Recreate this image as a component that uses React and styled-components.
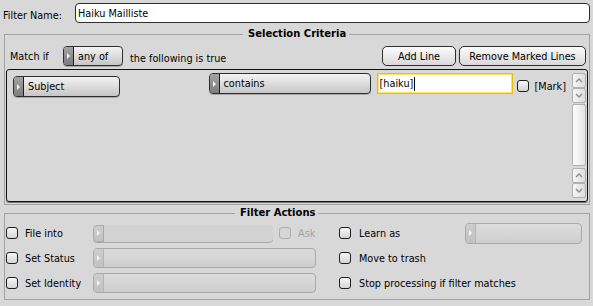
import styled, { createGlobalStyle } from "styled-components";

const panel = "#d8d8d8";
const dark = "#2e2e2e";
const soft = "#a9a9a9";
const frame = "#a2a2a2";

const Global = createGlobalStyle`
  * { box-sizing: border-box; }
  body {
    margin: 0;
    background: ${panel};
    font-family: "DejaVu Sans", "Liberation Sans", sans-serif;
    font-size: 9.7px;
    color: #000;
  }
`;

const Window = styled.div`
  width: 593px;
  height: 306px;
  padding: 3px 3px 0 3px;
  background: ${panel};
  display: flex;
  flex-direction: column;
  overflow: hidden;
`;

const NameRow = styled.div`
  display: flex;
  align-items: flex-start;
  height: 20px;
`;

const NameLabel = styled.span`
  width: 72px;
  padding-top: 7px;
  line-height: 12px;
`;

const TextBox = styled.div`
  flex: ${(p) => (p.$w ? "none" : 1)};
  width: ${(p) => (p.$w ? `${p.$w}px` : "auto")};
  height: ${(p) => p.$h || 20}px;
  background: #fff;
  border: 1px solid ${(p) => (p.$focus ? "#e9bf00" : dark)};
  box-shadow: ${(p) => (p.$focus ? "inset 0 0 0 1px #ffe45c" : "none")};
  border-radius: ${(p) => (p.$focus ? 0 : 4)}px;
  padding-left: ${(p) => (p.$focus ? 2 : 2)}px;
  display: flex;
  align-items: center;
  align-self: ${(p) => (p.$raised ? "flex-start" : "auto")};
  margin-left: ${(p) => p.$ml || 0}px;
  white-space: nowrap;
`;

const Caret = styled.span`
  display: inline-block;
  width: 1px;
  height: 14px;
  background: #000;
  margin-left: 1px;
`;

const Group = styled.fieldset`
  margin: ${(p) => p.$top}px 0 0 1px;
  padding: ${(p) => p.$pad};
  border: 1px solid ${frame};
  min-width: 0;
`;

const GroupTitle = styled.legend`
  font-weight: bold;
  font-size: 10px;
  line-height: 12px;
  padding: 0 3px 0 5px;
  margin-left: ${(p) => p.$offset}px;
`;

const MatchRow = styled.div`
  display: flex;
  align-items: center;
  height: 20px;
  padding: 0 2px 0 4px;
`;

const MatchLabel = styled.span`
  width: 53px;
`;

const Hint = styled.span`
  align-self: flex-start;
  padding-top: 7px;
  line-height: 12px;
  margin-left: 7px;
`;

const Button = styled.button`
  width: ${(p) => p.$w}px;
  height: 20px;
  margin-left: ${(p) => (p.$push ? "auto" : "3px")};
  padding: 0;
  border: 1px solid ${dark};
  border-radius: 5px;
  background: linear-gradient(#fcfcfc, #d9d9d9);
  font: inherit;
  color: #000;
`;

const Menu = styled.div`
  display: flex;
  flex: ${(p) => (p.$w ? "none" : 1)};
  width: ${(p) => (p.$w ? `${p.$w}px` : "auto")};
  height: ${(p) => p.$h || 20}px;
  border: 1px solid ${(p) => (p.$bare ? "transparent" : p.$off ? soft : dark)};
  border-width: ${(p) => (p.$bare ? 0 : 1)}px;
  border-radius: 4px;
  overflow: hidden;
  background: ${(p) =>
    p.$bare
      ? "#d2d2d2"
      : p.$off
      ? "linear-gradient(#dcdcdc, #cfcfcf)"
      : "linear-gradient(#f3f3f3, #c6c6c6)"};
  box-shadow: ${(p) => (p.$off ? "none" : "0 1px 0 rgba(0,0,0,0.22)")};
  align-self: ${(p) => (p.$raised ? "flex-start" : "auto")};
  margin-left: ${(p) => (p.$auto ? "auto" : "0")};
`;

const MenuTab = styled.span`
  flex: none;
  width: ${(p) => (p.$bare ? 11 : 10)}px;
  display: flex;
  align-items: center;
  justify-content: center;
  background: ${(p) =>
    p.$off ? "linear-gradient(#cdcdcd, #c2c2c2)" : "linear-gradient(#a4a4a4, #7c7c7c)"};
  border-right: 1px solid ${(p) => (p.$off ? "#b4b4b4" : "#1c1c1c")};
  border: ${(p) => (p.$bare ? `1px solid ${soft}` : undefined)};
  border-radius: ${(p) => (p.$bare ? "4px 0 0 4px" : 0)};

  &::after {
    content: "";
    border-left: 3px solid #f4f4f4;
    border-top: 3px solid transparent;
    border-bottom: 3px solid transparent;
  }
`;

const MenuText = styled.span`
  display: flex;
  align-items: center;
  padding-left: 4px;
  white-space: nowrap;
`;

const RuleList = styled.div`
  margin-top: 3px;
  height: 133px;
  border: 1px solid #111;
  border-radius: 3px;
  box-shadow: 0 1px 0 #777;
  display: flex;
  padding: 3px 1px 3px 6px;
`;

const Rules = styled.div`
  flex: 1;
  margin-right: 1px;
`;

const RuleRow = styled.div`
  display: flex;
  align-items: flex-end;
  height: 24px;
`;

const Check = styled.span`
  flex: none;
  width: 12px;
  height: 12px;
  border: 1px solid ${(p) => (p.$off ? "#adadad" : "#1e1e1e")};
  border-radius: 3px;
  background: ${(p) => (p.$off ? "#d6d6d6" : "linear-gradient(#f7f7f7, #d4d4d4)")};
  margin: ${(p) => p.$m || "0"};
`;

const Mark = styled.span`
  line-height: 21px;
  margin: 0 5px 0 6px;
`;

const ScrollBar = styled.div`
  width: 14px;
  display: flex;
  flex-direction: column;
`;

const ScrollBtn = styled.div`
  height: 15px;
  border: 1px solid #b0b0b0;
  border-radius: 2px;
  background: linear-gradient(90deg, #f6f6f6, #dcdcdc);
  display: flex;
  align-items: center;
  justify-content: center;
`;

const Thumb = styled.div`
  flex: 1;
  margin: 1px 0 2px;
  border: 1px solid #b0b0b0;
  border-radius: 2px;
  background: linear-gradient(90deg, #fdfdfd, #e4e4e4);
`;

const ActionsGrid = styled.div`
  display: grid;
  grid-template-columns: 310px 243px;
  grid-auto-rows: 20px;
  column-gap: 23px;
  row-gap: 5px;
`;

const ActionRow = styled.div`
  display: flex;
  align-items: center;
`;

const ActionLabel = styled.span`
  flex: none;
  width: ${(p) => p.$w}px;
  margin-left: ${(p) => p.$ml}px;
  color: ${(p) => (p.$off ? "#a3a3a3" : "#000")};
  white-space: nowrap;
`;

const Chevron = ({ up }) => (
  <svg width="8" height="5" viewBox="0 0 8 5">
    <path
      d={up ? "M1 4 L4 1 L7 4" : "M1 1 L4 4 L7 1"}
      fill="none"
      stroke="#8c8c8c"
      strokeWidth="1.4"
    />
  </svg>
);

const MenuField = ({ label, off, bare, ...rest }) => (
  <Menu $off={off} $bare={bare} {...rest}>
    <MenuTab $off={off || bare} $bare={bare} />
    {label && <MenuText>{label}</MenuText>}
  </Menu>
);

export default function App() {
  return (
    <Window>
      <Global />
      <NameRow>
        <NameLabel>Filter Name:</NameLabel>
        <TextBox>Haiku Mailliste</TextBox>
      </NameRow>

      <Group $top={5} $pad="6px 1px 2px 1px">
        <GroupTitle $offset={237}>Selection Criteria</GroupTitle>
        <MatchRow>
          <MatchLabel>Match if</MatchLabel>
          <MenuField label="any of" $w={60} />
          <Hint>the following is true</Hint>
          <Button $w={74} $push>
            Add Line
          </Button>
          <Button $w={127}>Remove Marked Lines</Button>
        </MatchRow>
        <RuleList>
          <Rules>
            <RuleRow>
              <MenuField label="Subject" $w={107} $h={21} />
              <MenuField label="contains" $w={162} $h={21} $auto $raised />
              <TextBox $focus $w={136} $h={21} $ml={6} $raised>
                [haiku]
                <Caret />
              </TextBox>
              <Check $m="0 0 5px 4px" />
              <Mark>[Mark]</Mark>
            </RuleRow>
          </Rules>
          <ScrollBar>
            <ScrollBtn>
              <Chevron up />
            </ScrollBtn>
            <ScrollBtn>
              <Chevron />
            </ScrollBtn>
            <Thumb />
            <ScrollBtn>
              <Chevron up />
            </ScrollBtn>
            <ScrollBtn>
              <Chevron />
            </ScrollBtn>
          </ScrollBar>
        </RuleList>
      </Group>

      <Group $top={2} $pad="4px 1px 6px 1px">
        <GroupTitle $offset={229}>Filter Actions</GroupTitle>
        <ActionsGrid>
          <ActionRow>
            <Check />
            <ActionLabel $w={68} $ml={7}>
              File into
            </ActionLabel>
            <MenuField bare $w={180} $h={17} />
            <Check $off $m="0 0 0 6px" />
            <ActionLabel $off $w={18} $ml={7}>
              Ask
            </ActionLabel>
          </ActionRow>
          <ActionRow>
            <Check />
            <ActionLabel $w={106} $ml={8}>
              Learn as
            </ActionLabel>
            <MenuField off $w={117} $h={21} />
          </ActionRow>
          <ActionRow>
            <Check />
            <ActionLabel $w={68} $ml={7}>
              Set Status
            </ActionLabel>
            <MenuField off />
          </ActionRow>
          <ActionRow>
            <Check />
            <ActionLabel $w={106} $ml={8}>
              Move to trash
            </ActionLabel>
          </ActionRow>
          <ActionRow>
            <Check />
            <ActionLabel $w={68} $ml={7}>
              Set Identity
            </ActionLabel>
            <MenuField off />
          </ActionRow>
          <ActionRow>
            <Check />
            <ActionLabel $w={200} $ml={8}>
              Stop processing if filter matches
            </ActionLabel>
          </ActionRow>
        </ActionsGrid>
      </Group>
    </Window>
  );
}
